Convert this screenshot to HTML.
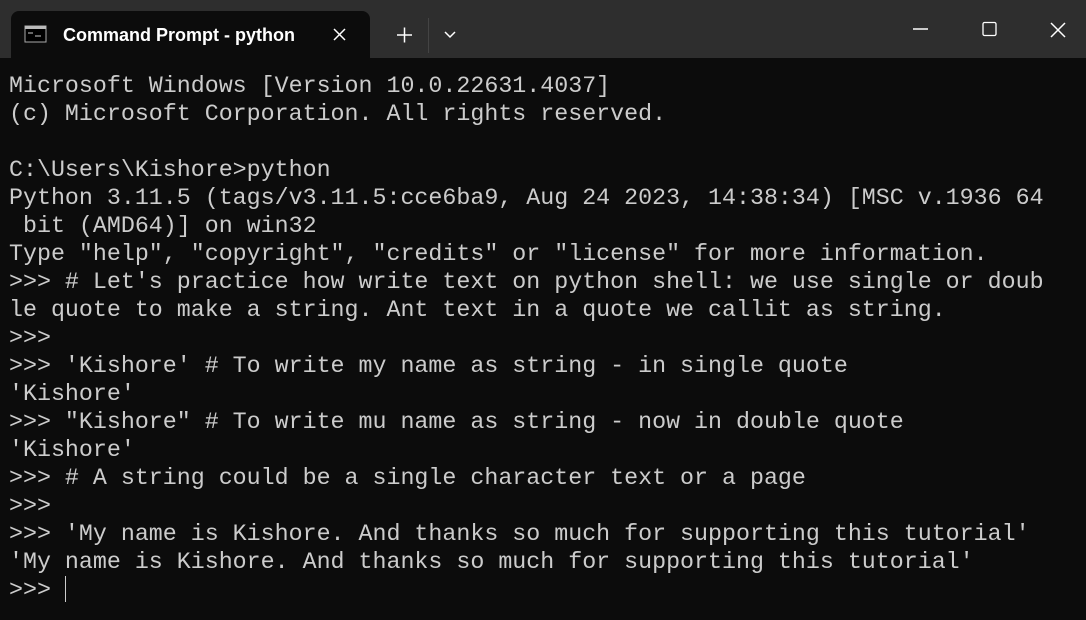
<!DOCTYPE html>
<html><head><style>
html,body{margin:0;padding:0;width:1086px;height:620px;overflow:hidden;background:#0c0c0c;}
.bar{position:absolute;left:0;top:0;width:1086px;height:58px;background:#2e2e2e;}
.tab{position:absolute;left:11px;top:11px;width:359px;height:48px;background:#0c0c0c;border-radius:8px 8px 0 0;}
.tt{position:absolute;left:63px;top:25px;font:600 18px "Liberation Sans",sans-serif;color:#fff;}
pre{position:absolute;left:9px;top:72px;margin:0;font:23.3px/28px "Liberation Mono",monospace;color:#cccccc;}
</style></head><body>
<div class="bar"></div>
<div class="tab"></div>
<svg style="position:absolute;left:0;top:0" width="1086" height="58">
<rect x="25" y="26" width="21" height="16" fill="#000" stroke="#aaa" stroke-width="1"/>
<rect x="25" y="26" width="21" height="3" fill="#bbb"/>
<path d="M28 33h5M35 36h6" stroke="#ccc" stroke-width="1"/>
<path d="M334 29l11 11M345 29l-11 11" stroke="#fff" stroke-width="1.5"/>
<path d="M397 35h15M404.5 27.5v15" stroke="#fff" stroke-width="1.5"/>
<path d="M428.5 18v35" stroke="#444" stroke-width="1"/>
<path d="M445 32l5 5 5-5" stroke="#fff" stroke-width="1.5" fill="none"/>
<path d="M913 29h15" stroke="#fff" stroke-width="1.5"/>
<rect x="983" y="22.5" width="13" height="13" rx="1.5" fill="none" stroke="#fff" stroke-width="1.3"/>
<path d="M1051 23l14 14M1065 23l-14 14" stroke="#fff" stroke-width="1.5"/>
</svg>
<div class="tt">Command Prompt - python</div>
<pre>Microsoft Windows [Version 10.0.22631.4037]
(c) Microsoft Corporation. All rights reserved.

C:\Users\Kishore&gt;python
Python 3.11.5 (tags/v3.11.5:cce6ba9, Aug 24 2023, 14:38:34) [MSC v.1936 64
 bit (AMD64)] on win32
Type "help", "copyright", "credits" or "license" for more information.
&gt;&gt;&gt; # Let's practice how write text on python shell: we use single or doub
le quote to make a string. Ant text in a quote we callit as string.
&gt;&gt;&gt;
&gt;&gt;&gt; 'Kishore' # To write my name as string - in single quote
'Kishore'
&gt;&gt;&gt; "Kishore" # To write mu name as string - now in double quote
'Kishore'
&gt;&gt;&gt; # A string could be a single character text or a page
&gt;&gt;&gt;
&gt;&gt;&gt; 'My name is Kishore. And thanks so much for supporting this tutorial'
'My name is Kishore. And thanks so much for supporting this tutorial'
&gt;&gt;&gt; <span style="display:inline-block;width:1px;height:26px;background:#ccc;vertical-align:-6px"></span></pre>
</body></html>
